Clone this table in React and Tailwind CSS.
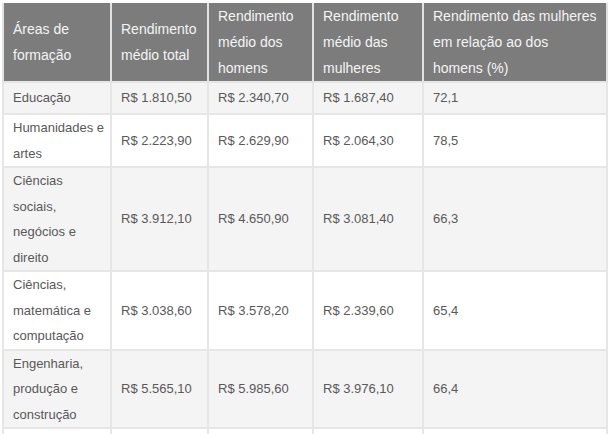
import React from "react";

const rows = [
  ["Educação", "R$ 1.810,50", "R$ 2.340,70", "R$ 1.687,40", "72,1"],
  ["Humanidades e artes", "R$ 2.223,90", "R$ 2.629,90", "R$ 2.064,30", "78,5"],
  ["Ciências sociais, negócios e direito", "R$ 3.912,10", "R$ 4.650,90", "R$ 3.081,40", "66,3"],
  ["Ciências, matemática e computação", "R$ 3.038,60", "R$ 3.578,20", "R$ 2.339,60", "65,4"],
  ["Engenharia, produção e construção", "R$ 5.565,10", "R$ 5.985,60", "R$ 3.976,10", "66,4"],
];

// header lines broken as in the source page
const headers = [
  ["Áreas de", "formação"],
  ["Rendimento", "médio total"],
  ["Rendimento", "médio dos", "homens"],
  ["Rendimento", "médio das", "mulheres"],
  ["Rendimento das mulheres", "em relação ao dos", "homens (%)"],
];

export default function App() {
  return (
    <div className="w-[611px] h-[434px] overflow-hidden bg-white pt-[3px] pl-[2px] font-['Liberation_Sans',Arial,sans-serif]">
      <table className="w-[604px] table-fixed border-collapse">
        <colgroup>
          <col className="w-[108px]" />
          <col className="w-[97px]" />
          <col className="w-[105px]" />
          <col className="w-[110px]" />
          <col className="w-[184px]" />
        </colgroup>
        <thead>
          <tr className="bg-[#7c7c7c]">
            {headers.map((h) => (
              <th
                key={h.join(" ")}
                className="h-[76px] border-x-2 border-[#e2e2e2] pl-[9px] pr-[2px] py-0 text-left align-middle text-[14px] font-normal leading-[26px] text-[#f4f4f4] whitespace-nowrap"
              >
                {h.map((line, k) => (
                  <div key={k}>{line}</div>
                ))}
              </th>
            ))}
          </tr>
        </thead>
        <tbody>
          {rows.map((r, i) => (
            <tr key={r[0]} className={i % 2 === 0 ? "bg-[#f4f4f4]" : "bg-white"}>
              {r.map((c, j) => (
                <td
                  key={j}
                  className={`border-2 border-[#e6e6e6] pl-[9px] pr-[3px] py-0 align-middle text-[13px] leading-[25.5px] text-[#595959] ${i === 0 ? "h-[32px]" : ""}`}
                >
                  {c}
                </td>
              ))}
            </tr>
          ))}
          <tr className="bg-white">
            {[0, 1, 2, 3, 4].map((j) => (
              <td key={j} className="h-[40px] border-2 border-[#e6e6e6]" />
            ))}
          </tr>
        </tbody>
      </table>
    </div>
  );
}
